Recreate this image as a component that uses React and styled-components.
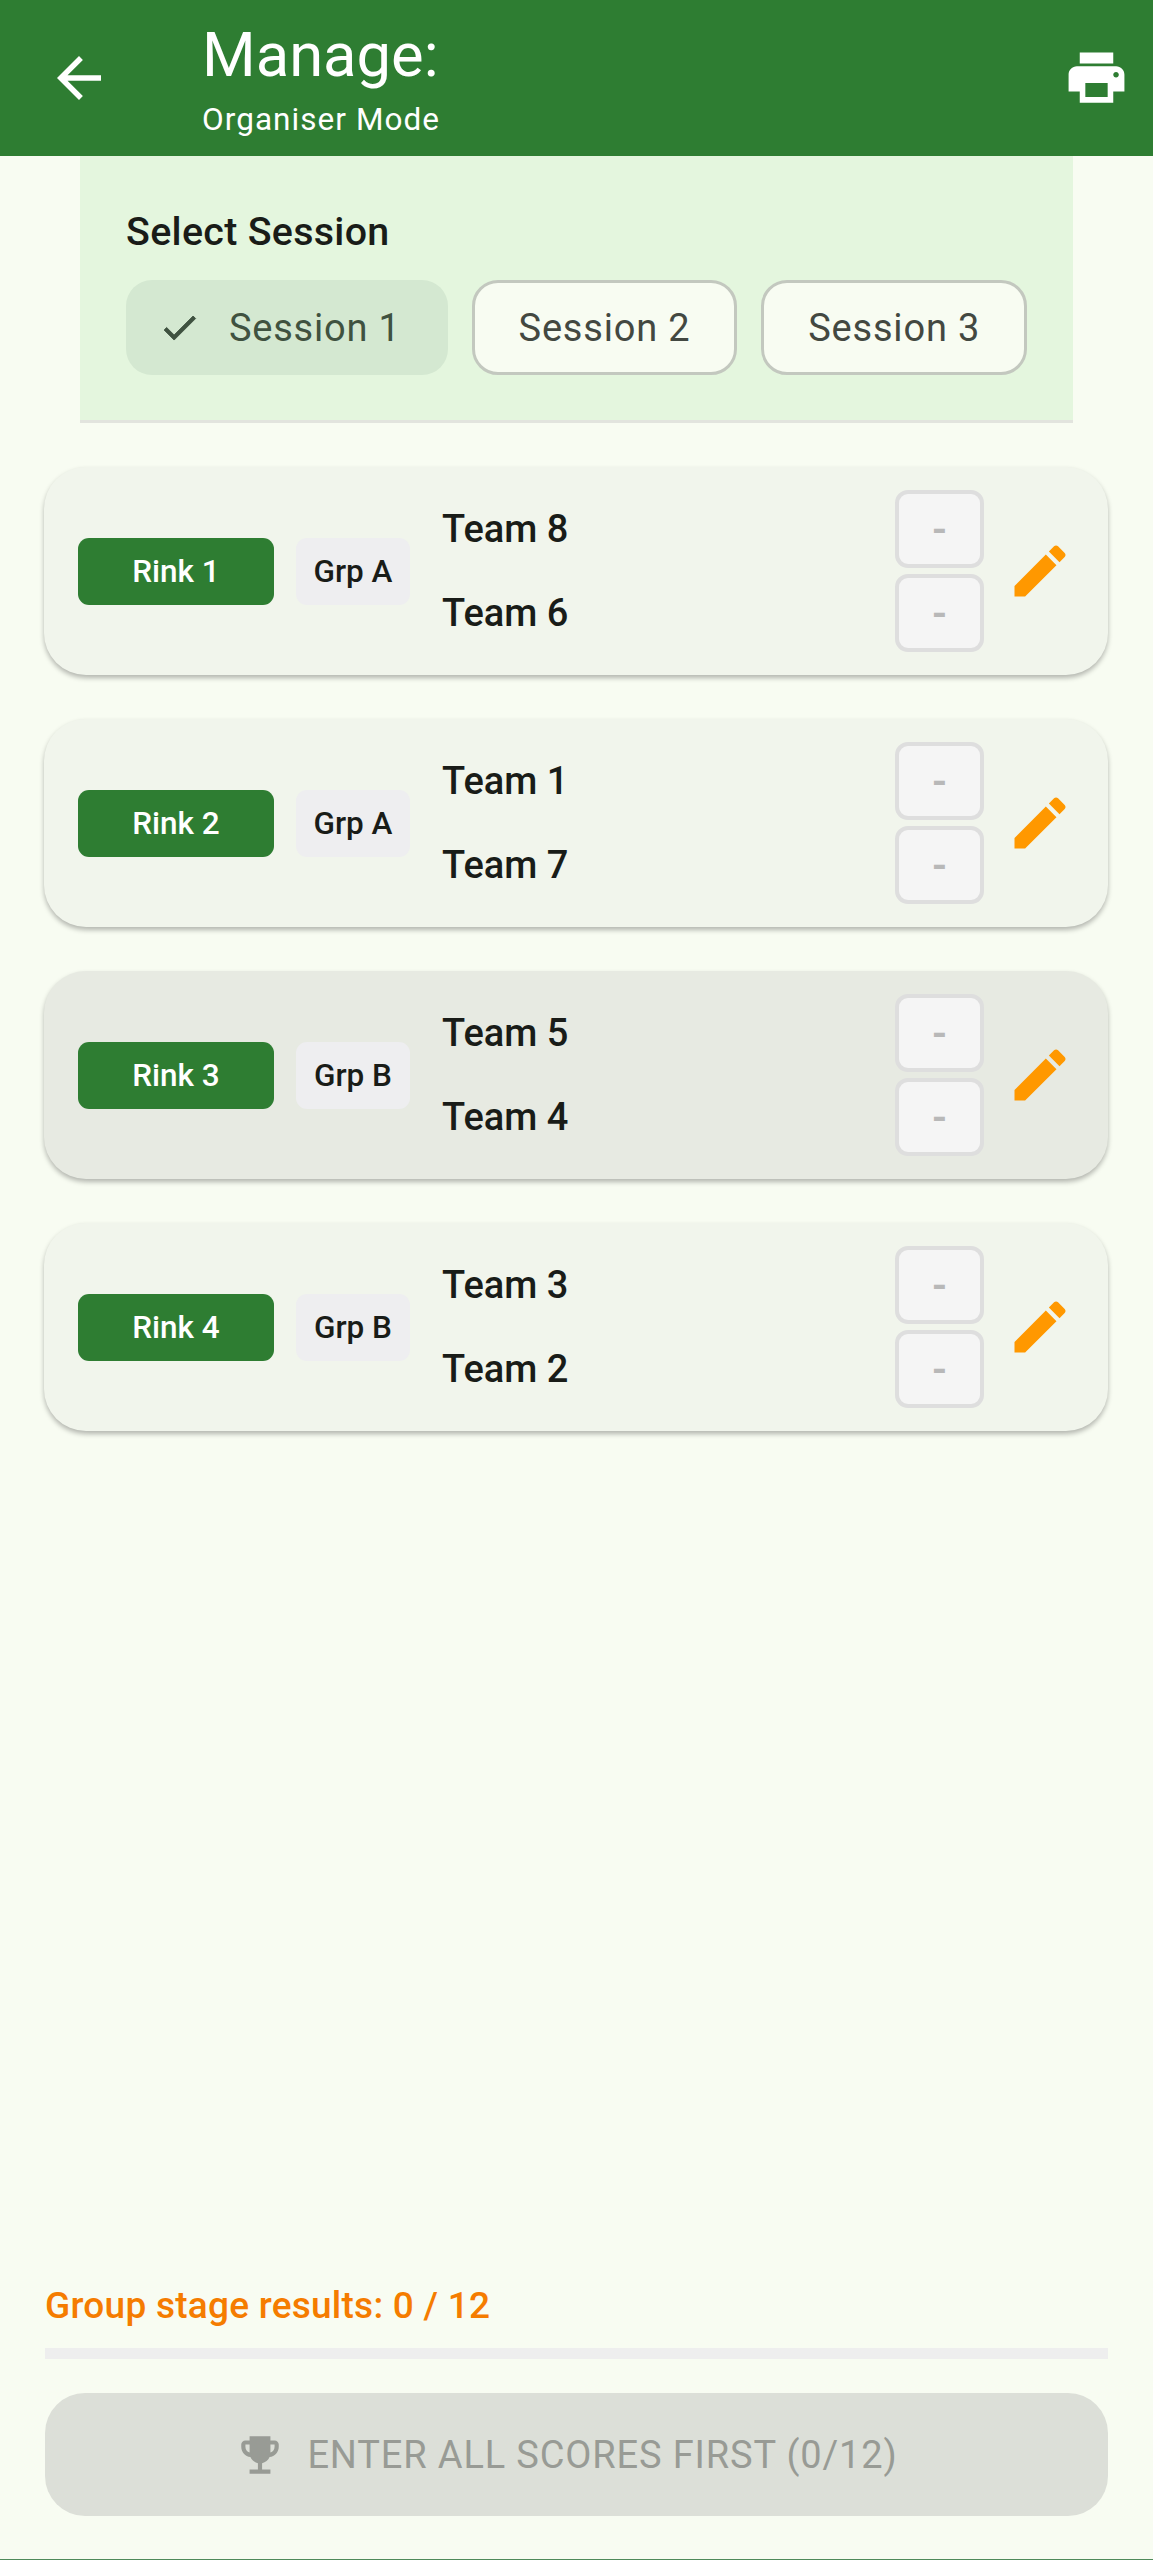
import React from 'react';
import styled, { createGlobalStyle } from 'styled-components';

const GlobalStyle = createGlobalStyle`
  html, body {
    margin: 0;
    padding: 0;
    background: #f8fcf2;
  }
  * {
    box-sizing: border-box;
  }
`;

const matches = [
    { rink: 'Rink 1', group: 'Grp A', teams: ['Team 8', 'Team 6'] },
    { rink: 'Rink 2', group: 'Grp A', teams: ['Team 1', 'Team 7'] },
    { rink: 'Rink 3', group: 'Grp B', teams: ['Team 5', 'Team 4'], active: true },
    { rink: 'Rink 4', group: 'Grp B', teams: ['Team 3', 'Team 2'] },
];

const Icon = ({ d, size, color, thicken }) => (
    <svg width={size} height={size} viewBox="0 0 24 24" fill={color} stroke={thicken ? color : 'none'} strokeWidth={thicken || 0}>
        <path d={d} />
    </svg>
);

const ARROW = 'M20 11H7.83l5.59-5.59L12 4l-8 8 8 8 1.41-1.41L7.83 13H20v-2z';
const PRINT = 'M19 8H5c-1.66 0-3 1.34-3 3v6h4v4h12v-4h4v-6c0-1.66-1.34-3-3-3zm-3 11H8v-5h8v5zm3-7c-.55 0-1-.45-1-1s.45-1 1-1 1 .45 1 1-.45 1-1 1zm-1-9H6v4h12V3z';
const EDIT = 'M3 17.25V21h3.75L17.81 9.94l-3.75-3.75L3 17.25zM20.71 7.04c.39-.39.39-1.02 0-1.41l-2.34-2.34c-.39-.39-1.02-.39-1.41 0l-1.83 1.83 3.75 3.75 1.83-1.83z';
const CHECK = 'M9 16.17L4.83 12l-1.42 1.41L9 19 21 7l-1.41-1.41z';
const TROPHY = 'M19 5h-2V3H7v2H5c-1.1 0-2 .9-2 2v1c0 2.55 1.92 4.63 4.39 4.94.63 1.5 1.98 2.63 3.61 2.96V19H7v2h10v-2h-4v-3.1c1.63-.33 2.98-1.46 3.61-2.96C19.08 12.63 21 10.55 21 8V7c0-1.1-.9-2-2-2zM5 8V7h2v3.82C5.84 10.4 5 9.3 5 8zm14 0c0 1.3-.84 2.4-2 2.82V7h2v1z';

function App() {
    return (
        <Page>
            <GlobalStyle />
            <Header>
                <BackButton><Icon d={ARROW} size={66} color="#fff" /></BackButton>
                <HeaderTitles>
                    <Title>Manage:</Title>
                    <Subtitle>Organiser Mode</Subtitle>
                </HeaderTitles>
                <PrintButton><Icon d={PRINT} size={67} color="#fff" /></PrintButton>
            </Header>

            <SessionPanel>
                <PanelLabel>Select Session</PanelLabel>
                <SessionRow>
                    <SessionChip $selected>
                        <Icon d={CHECK} size={43} color="#3f5240" thicken={0.5} />
                        Session 1
                    </SessionChip>
                    <SessionChip>Session 2</SessionChip>
                    <SessionChip>Session 3</SessionChip>
                </SessionRow>
            </SessionPanel>

            <MatchList>
                {matches.map((m) => (
                    <MatchCard key={m.rink} $active={m.active}>
                        <RinkChip>{m.rink}</RinkChip>
                        <GroupChip>{m.group}</GroupChip>
                        <Teams>
                            {m.teams.map((t) => <TeamName key={t}>{t}</TeamName>)}
                        </Teams>
                        <Scores>
                            <ScoreBox>-</ScoreBox>
                            <ScoreBox>-</ScoreBox>
                        </Scores>
                        <EditButton><Icon d={EDIT} size={68} color="#ff9800" /></EditButton>
                    </MatchCard>
                ))}
            </MatchList>

            <Footer>
                <ResultsLabel>Group stage results: 0 / 12</ResultsLabel>
                <Progress />
                <FinishButton>
                    <Icon d={TROPHY} size={50} color="#989b95" />
                    ENTER ALL SCORES FIRST (0/12)
                </FinishButton>
            </Footer>
        </Page>
    )
}

export default App

const Page = styled.div`
  width: 1153px;
  height: 2560px;
  display: flex;
  flex-direction: column;
  background: #f8fcf2;
  border-bottom: 1px solid #4f8a5b;
  font-family: Roboto, sans-serif;
  color: #191c18;
  overflow: hidden;
`;

const Header = styled.header`
  height: 156px;
  flex: none;
  display: flex;
  align-items: flex-start;
  background: #2e7d32;
  color: #fff;
`;

const BackButton = styled.div`
  display: flex;
  margin: 45px 0 0 46px;
`;

const HeaderTitles = styled.div`
  margin-left: 90px;
  flex: 1;
`;

const Title = styled.div`
  font-size: 61.5px;
  line-height: 70px;
  margin-top: 20px;
`;

const Subtitle = styled.div`
  font-size: 31.5px;
  letter-spacing: 1.05px;
  line-height: 37px;
  margin-top: 11px;
`;

const PrintButton = styled.div`
  display: flex;
  margin: 44px 23px 0 0;
`;

const SessionPanel = styled.section`
  flex: none;
  margin: 0 80px;
  height: 267px;
  padding: 53px 46px 0;
  background: #e4f6de;
  border-bottom: 3px solid #e2e4de;
`;

const PanelLabel = styled.div`
  font-size: 39.4px;
  letter-spacing: 0.3px;
  line-height: 46px;
  font-weight: 500;
`;

const SessionRow = styled.div`
  display: flex;
  gap: 24px;
  margin-top: 25px;
`;

const SessionChip = styled.div`
  height: 95px;
  display: flex;
  align-items: center;
  justify-content: center;
  gap: ${(p) => (p.$selected ? '28px' : '0')};
  padding-right: ${(p) => (p.$selected ? '15px' : '0')};
  width: ${(p) => (p.$selected ? '322px' : '266px')};
  font-size: 38px;
  letter-spacing: 0.8px;
  color: ${(p) => (p.$selected ? '#3f5240' : '#434841')};
  border-radius: 26px;
  background: ${(p) => (p.$selected ? '#d4e8d1' : '#f8fcf2')};
  border: ${(p) => (p.$selected ? 'none' : '3px solid #c3c8bf')};
`;

const MatchList = styled.div`
  display: flex;
  flex-direction: column;
  gap: 44px;
  padding: 44px 45px 0 44px;
`;

const MatchCard = styled.article`
  height: 208px;
  display: flex;
  align-items: center;
  padding: 0 34px 0 34px;
  border-radius: 42px;
  background: ${(p) => (p.$active ? '#e7eae2' : '#f1f5ec')};
  box-shadow: 0 3px 5px rgba(0, 0, 0, 0.28);
`;

const RinkChip = styled.div`
  width: 196px;
  height: 67px;
  display: flex;
  align-items: center;
  justify-content: center;
  border-radius: 11px;
  background: #2e7d32;
  color: #fff;
  font-size: 31.5px;
  font-weight: 500;
`;

const GroupChip = styled.div`
  width: 114px;
  height: 67px;
  margin-left: 22px;
  display: flex;
  align-items: center;
  justify-content: center;
  border-radius: 11px;
  background: #eeeef0;
  font-size: 31.5px;
  font-weight: 500;
`;

const Teams = styled.div`
  flex: 1;
  margin-left: 32px;
`;

const TeamName = styled.div`
  font-size: 38px;
  line-height: 84px;
  font-weight: 500;
`;

const Scores = styled.div`
  display: flex;
  flex-direction: column;
  gap: 6px;
`;

const ScoreBox = styled.div`
  width: 89px;
  height: 78px;
  display: flex;
  align-items: center;
  justify-content: center;
  border: 4px solid #dedede;
  border-radius: 13px;
  background: #f5f5f5;
  color: #b8b8b8;
  font-size: 39.4px;
  font-weight: 700;
`;

const EditButton = styled.div`
  display: flex;
  margin-left: 22px;
`;

const Footer = styled.div`
  margin-top: auto;
  padding: 0 45px 43px;
`;

const ResultsLabel = styled.div`
  font-size: 37px;
  letter-spacing: 0.25px;
  line-height: 44px;
  font-weight: 500;
  color: #f57c00;
`;

const Progress = styled.div`
  height: 11px;
  margin-top: 20px;
  background: #eeeeee;
`;

const FinishButton = styled.div`
  height: 123px;
  margin-top: 34px;
  padding-right: 20px;
  display: flex;
  align-items: center;
  justify-content: center;
  gap: 22px;
  border-radius: 40px;
  background: #dcdfd8;
  color: #989b95;
  font-size: 38px;
  letter-spacing: 0.85px;
`;
